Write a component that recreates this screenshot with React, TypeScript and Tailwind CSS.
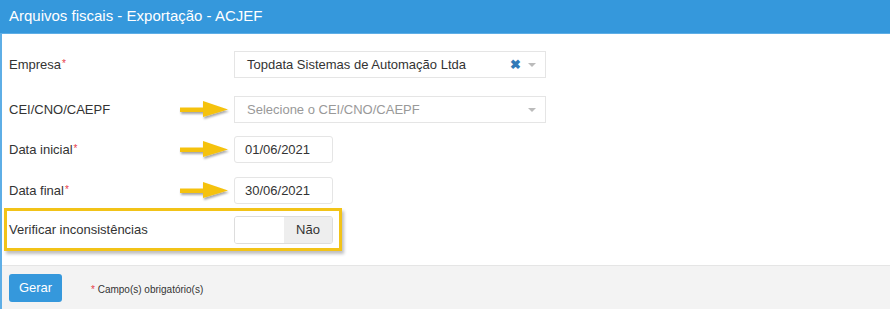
import React from "react";

function Arrow() {
  return (
    <svg width="56" height="26" viewBox="0 0 56 26" className="absolute" style={{ left: 168, top: -13 }}>
      <defs>
        <filter id="sh" x="-20%" y="-50%" width="140%" height="200%">
          <feDropShadow dx="1" dy="2" stdDeviation="1.2" floodColor="#000" floodOpacity="0.35" />
        </filter>
      </defs>
      <path d="M3 10.5 L26 10.5 L26 4 L51 12.5 L26 20 L26 15 L3 15 Z" fill="#f5c211" filter="url(#sh)" />
    </svg>
  );
}

function Label({ text, req }: { text: string; req?: boolean }) {
  return (
    <div className="w-[225px] text-[13px] text-[#333]">
      {text}
      {req && <span className="text-[#e73d4a] text-[10px] align-top ml-[1px] relative top-[1px]">*</span>}
    </div>
  );
}

export default function App() {
  return (
    <div className="w-[890px] h-[309px] bg-white flex flex-col" style={{ fontFamily: '"Liberation Sans", Arial, sans-serif' }}>
      <div className="h-[34px] bg-[#3598dc] border-b border-[#5eaee6] flex items-center pl-[9px] text-white text-[15px]">
        Arquivos fiscais - Exportação - ACJEF
      </div>
      <div className="flex-1 flex flex-col border-l-2 border-[#5eaee6]">
        <div className="flex flex-col pt-[17px] pl-[7px] pb-[14px]">
          <div className="flex items-center h-[27px]">
            <Label text="Empresa" req />
            <div className="w-[312px] h-[27px] border border-[#e5e5e5] flex items-center pl-[12px] pr-[9px] text-[13px] text-[#333]">
              <span className="flex-1">Topdata Sistemas de Automação Ltda</span>
              <span className="text-[#337ab7] text-[13px] font-bold mr-[7px] leading-none">✖</span>
              <span className="w-0 h-0 border-l-[4px] border-r-[4px] border-t-[4px] border-l-transparent border-r-transparent border-t-[#bbb]" />
            </div>
          </div>
          <div className="flex items-center h-[27px] mt-[18px] relative">
            <Label text="CEI/CNO/CAEPF" />
            <div className="w-[312px] h-[27px] border border-[#e5e5e5] flex items-center pl-[12px] pr-[9px] text-[13px] text-[#999]">
              <span className="flex-1">Selecione o CEI/CNO/CAEPF</span>
              <span className="w-0 h-0 border-l-[4px] border-r-[4px] border-t-[4px] border-l-transparent border-r-transparent border-t-[#bbb]" />
            </div>
            <div className="absolute left-0 top-1/2"><Arrow /></div>
          </div>
          <div className="flex items-center h-[27px] mt-[13px] relative">
            <Label text="Data inicial" req />
            <div className="w-[99px] h-[27px] border border-[#e5e5e5] rounded-[3px] flex items-center pl-[10px] text-[13px] text-[#333]">01/06/2021</div>
            <div className="absolute left-0 top-1/2"><Arrow /></div>
          </div>
          <div className="flex items-center h-[27px] mt-[14px] relative">
            <Label text="Data final" req />
            <div className="w-[99px] h-[27px] border border-[#e5e5e5] rounded-[3px] flex items-center pl-[10px] text-[13px] text-[#333]">30/06/2021</div>
            <div className="absolute left-0 top-1/2"><Arrow /></div>
          </div>
          <div className="mt-[4px] ml-[-5px] w-[338px] h-[43px] border-[3px] border-[#f2c318] shadow-[2px_3px_3px_rgba(0,0,0,0.25)] flex items-center pl-[2px]">
            <div className="w-[225px] text-[13px] text-[#333]">Verificar inconsistências</div>
            <div className="w-[99px] h-[28px] border border-[#ddd] rounded-[3px] flex overflow-hidden">
              <div className="w-[49px] bg-white" />
              <div className="flex-1 bg-[#eeeeee] flex items-center justify-center text-[13px] text-[#333]">Não</div>
            </div>
          </div>
        </div>
        <div className="flex-1 bg-[#f3f3f3] border-t border-[#e5e5e5] flex items-start pt-[8px] pl-[7px]">
          <div className="w-[53px] h-[28px] bg-[#3598dc] rounded-[3px] text-white text-[13px] flex items-center justify-center">Gerar</div>
          <div className="ml-[29px] mt-[8px] text-[10px] text-[#333]"><span className="text-[#e73d4a]">*</span> Campo(s) obrigatório(s)</div>
        </div>
      </div>
    </div>
  );
}
